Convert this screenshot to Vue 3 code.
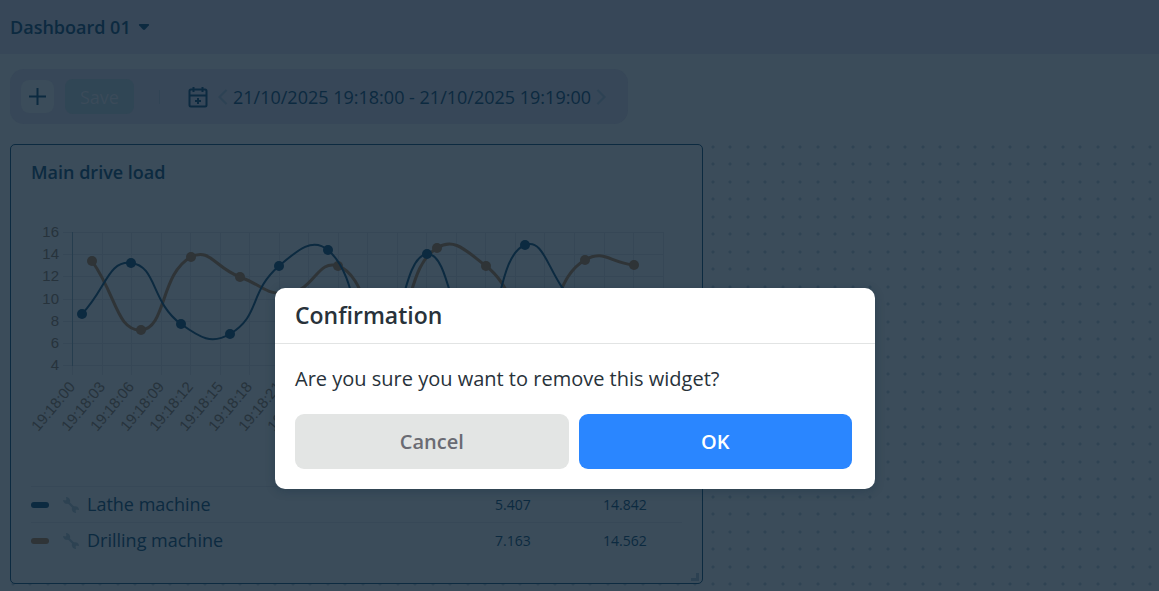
<script setup>
import { computed } from 'vue'

const yTicks = [16, 14, 12, 10, 8, 6, 4]
const xTicks = Array.from({ length: 21 }, (_, i) => {
  const s = i * 3
  return {
    x: Math.round(61 + i * 29.53),
    label: s < 60 ? `19:18:${String(s).padStart(2, '0')}` : '19:19:00',
  }
})
const yPos = (v) => Math.round(32 + (16 - v) * 11.1)

const series = [
  {
    name: 'Drilling machine',
    tone: 'brown',
    min: '7.163',
    max: '14.562',
    points: [[81, 61], [130, 130], [180, 57], [229, 77], [278, 93], [327, 66], [377, 128], [426, 48], [475, 66], [524, 122], [574, 60], [623, 65]],
  },
  {
    name: 'Lathe machine',
    tone: 'navy',
    min: '5.407',
    max: '14.842',
    points: [[71, 114], [120, 63], [170, 124], [219, 134], [268, 66], [317, 50], [366, 150], [416, 54], [465, 141], [514, 45], [564, 103], [613, 140]],
  },
]

function smooth(pts) {
  const t = 0.5
  const ctl = pts.map((c, i) => {
    const p = pts[i - 1] || c
    const n = pts[i + 1] || c
    const a = Math.hypot(c[0] - p[0], c[1] - p[1])
    const b = Math.hypot(n[0] - c[0], n[1] - c[1])
    const fa = (t * a) / (a + b)
    const fb = (t * b) / (a + b)
    const dx = n[0] - p[0]
    const dy = n[1] - p[1]
    return { before: [c[0] - fa * dx, c[1] - fa * dy], after: [c[0] + fb * dx, c[1] + fb * dy] }
  })
  return pts.reduce(
    (d, p, i) => (i ? `${d} C${ctl[i - 1].after} ${ctl[i].before} ${p}` : `M${p}`),
    '',
  )
}

const lines = computed(() => series.map((s) => ({ ...s, d: smooth(s.points) })))
const legend = [...series].reverse()
</script>

<template>
  <div class="page">
    <header class="topbar">
      <button class="picker" type="button">
        Dashboard 01
        <svg width="12" height="8" viewBox="0 0 12 8"><path d="M1.6 1h8.8q1.2.2.5 1.3L7 6.6q-1 .9-2 0L1.100 2.300Q.4 1.200 1.600 1z" /></svg>
      </button>
    </header>

    <main class="content">
      <div class="toolbar">
        <button class="add" type="button" aria-label="Add widget">
          <svg width="17" height="17" viewBox="0 0 17 17"><path d="M8.500 0v17M0 8.500h17" /></svg>
        </button>
        <button class="save" type="button" disabled>Save</button>
        <span class="divider"></span>
        <button class="icon calendar" type="button" aria-label="Pick period">
          <svg width="20" height="22" viewBox="0 0 20 22">
            <rect x="1.500" y="3.500" width="17" height="17" rx="1.500" />
            <path d="M1 9.500h18M5.500 1v5M14.500 1v5M10 12v6M7 15h6" />
          </svg>
        </button>
        <button class="icon arrow" type="button" aria-label="Previous period">
          <svg width="10" height="16" viewBox="0 0 10 16"><path d="M8.500 1 1.500 8l7 7" /></svg>
        </button>
        <button class="range" type="button">21/10/2025 19:18:00 - 21/10/2025 19:19:00</button>
        <button class="icon arrow" type="button" aria-label="Next period">
          <svg width="10" height="16" viewBox="0 0 10 16"><path d="m1.500 1 7 7-7 7" /></svg>
        </button>
      </div>

      <div class="board">
        <section class="widget">
          <h2>Main drive load</h2>
          <svg class="chart" viewBox="0 0 691 285">
            <g class="grid">
              <path v-for="v in yTicks" :key="v" :d="`M52 ${yPos(v) + 0.5}H652`" />
              <path v-for="t in xTicks" :key="t.x" :d="`M${t.x + 0.5} 32V175`" />
              <path class="axis" d="M61.500 32V166" />
            </g>
            <g class="labels">
              <text v-for="v in yTicks" :key="v" x="48" :y="yPos(v) + 5" text-anchor="end">{{ v }}</text>
              <text
                v-for="t in xTicks"
                :key="t.label"
                :transform="`translate(${t.x} 184) rotate(-50)`"
                y="5"
                text-anchor="end"
              >{{ t.label }}</text>
            </g>
            <g v-for="l in lines" :key="l.name" :class="l.tone">
              <path class="line" :d="l.d" />
              <circle v-for="p in l.points" :key="p[0]" :cx="p[0]" :cy="p[1]" r="5" />
            </g>
          </svg>
          <table class="legend">
            <tbody>
              <tr v-for="s in legend" :key="s.name">
                <td class="key"><span class="swatch" :class="s.tone"></span></td>
                <td class="tool">
                  <svg width="16" height="16" viewBox="0 0 16 16">
                    <path class="shaft" d="m4 4 8 8" />
                    <path d="M3 0 3.500 2.500 2.500 3.500 0 3a4 4 0 0 0 5.500 3.500L7 5A4 4 0 0 0 3 0zM13 16l-.5-2.500 1-1 2.500.5a4 4 0 0 0-5.500-3.500L9 11a4 4 0 0 0 4 5z" />
                  </svg>
                </td>
                <th scope="row">{{ s.name }}</th>
                <td class="num">{{ s.min }}</td>
                <td class="num">{{ s.max }}</td>
              </tr>
            </tbody>
          </table>
          <span class="resize"></span>
        </section>
      </div>
    </main>

    <div class="overlay">
      <div class="dialog" role="dialog" aria-modal="true" aria-labelledby="dlg-title">
        <h1 id="dlg-title">Confirmation</h1>
        <div class="body">
          <p>Are you sure you want to remove this widget?</p>
          <div class="actions">
            <button class="cancel" type="button">Cancel</button>
            <button class="ok" type="button">OK</button>
          </div>
        </div>
      </div>
    </div>
  </div>
</template>

<style>
body {
  background: #3b4c5a;
  overflow: hidden;
}
</style>

<style scoped>
* {
  box-sizing: border-box;
}
.page {
  position: relative;
  min-height: 100vh;
  display: flex;
  flex-direction: column;
  color: #0c2a40;
  font-family: "Open Sans", "Noto Sans", sans-serif;
}
button {
  font: inherit;
  color: inherit;
  background: none;
  border: 0;
  padding: 0;
}
svg {
  display: block;
  fill: none;
}
.topbar {
  height: 54px;
  padding: 0 10px;
  display: flex;
  align-items: center;
  background: #374758;
}
.picker {
  display: flex;
  align-items: center;
  gap: 7px;
  font-size: 18px;
  font-weight: 600;
}
.picker svg {
  fill: #0c2a40;
}
.content {
  flex: 1;
  display: flex;
  flex-direction: column;
  align-items: flex-start;
  padding: 15px 0 0 10px;
}
.toolbar {
  height: 55px;
  display: flex;
  align-items: center;
  padding: 0 22px 0 11px;
  border-radius: 14px;
  background: #374758;
  font-size: 18px;
}
.toolbar path,
.toolbar rect {
  stroke: #0c2a40;
  stroke-width: 2;
}
.add {
  width: 33px;
  height: 33px;
  display: grid;
  place-items: center;
  border-radius: 8px;
  background: #3b4c5a;
}
.save {
  width: 69px;
  height: 35px;
  margin-left: 11px;
  border-radius: 8px;
  background: #304655;
  color: #3b4b5a;
}
.divider {
  width: 1px;
  height: 14px;
  margin: 0 28px 0 25px;
  background: #314455;
}
.toolbar .arrow path {
  stroke: #2d4254;
}
.calendar {
  margin-right: 10px;
}
.range {
  margin: 0 5px;
  white-space: nowrap;
}
.board {
  flex: 1;
  align-self: stretch;
  margin-top: 20px;
  display: grid;
  grid-template-columns: minmax(0, 693px) 1fr;
  align-items: start;
  background-image:
    radial-gradient(circle at 3px 3px, #2f4353 1px, transparent 2px),
    radial-gradient(circle at 20px 3px, #2f4353 1px, transparent 2px),
    radial-gradient(circle at 3px 20px, #2f4353 1px, transparent 2px),
    radial-gradient(circle at 20px 20px, #2f4353 1px, transparent 2px);
  background-size: 35px 35px;
}
.widget {
  position: relative;
  padding-bottom: 24px;
  border: 1px solid #0c2a40;
  border-radius: 5px;
  background: #3b4c5a;
}
h2 {
  margin: 0;
  padding: 15px 20px 0;
  height: 55px;
  font-size: 18px;
  line-height: 25px;
  font-weight: 600;
}
.chart {
  width: 100%;
}
.grid path {
  stroke: #364756;
}
.grid .axis {
  stroke: #263d4e;
}
.labels {
  fill: #27333c;
  font-family: "Liberation Sans", Arial, sans-serif;
  font-size: 15px;
}
.line {
  stroke-width: 2;
}
.navy {
  stroke: #0c2a40;
}
.brown {
  stroke: #2f3437;
}
.navy circle {
  fill: #0c2a40;
  stroke: none;
}
.brown circle {
  fill: #2f3437;
  stroke: none;
}
.brown .line {
  stroke-width: 3;
}
.legend {
  width: calc(100% - 40px);
  margin: 1px 20px 0;
  border-collapse: collapse;
  table-layout: fixed;
}
.legend tr {
  height: 36px;
  border-top: 1px solid #374857;
}
.legend td,
.legend th {
  padding: 0;
  text-align: left;
}
.legend th {
  font-size: 18px;
  font-weight: 400;
  line-height: 25px;
}
.key {
  width: 32px;
}
.tool {
  width: 24px;
}
.legend .num {
  width: 108px;
  padding-left: 29px;
  font-size: 14px;
}
.swatch {
  display: block;
  width: 18px;
  height: 6px;
  border-radius: 3px;
}
.swatch.navy {
  background: #0c2a40;
}
.swatch.brown {
  background: #2f3437;
}
.tool path {
  fill: #2d4252;
}
.tool .shaft {
  stroke: #2d4252;
  stroke-width: 2;
}
.resize {
  position: absolute;
  right: 3px;
  bottom: 2px;
  width: 8px;
  height: 8px;
  border: solid #2c4152;
  border-width: 0 3px 3px 0;
}
.overlay {
  position: absolute;
  inset: 0;
  display: flex;
  justify-content: center;
  align-items: flex-start;
  padding: 288px 9px 0 0;
}
.dialog {
  width: min(600px, 100%);
  border-radius: 10px;
  background: #fff;
  color: #28323a;
  box-shadow: 0 2px 10px rgba(12, 42, 64, 0.3);
}
h1 {
  margin: 0;
  padding: 0 20px;
  font-size: 23px;
  line-height: 55px;
  font-weight: 600;
  border-bottom: 1px solid #e2e4e4;
}
.body {
  padding: 20px 23px 20px 20px;
}
p {
  margin: 0 0 20px;
  font-size: 20px;
  line-height: 30px;
}
.actions {
  display: flex;
  gap: 10px;
}
.actions button {
  flex: 1;
  height: 55px;
  border-radius: 9px;
  font-size: 20px;
  font-weight: 600;
}
.actions .cancel {
  background: #e3e5e4;
  color: #6a6b73;
}
.actions .ok {
  background: #2a86ff;
  color: #fff;
}
</style>
